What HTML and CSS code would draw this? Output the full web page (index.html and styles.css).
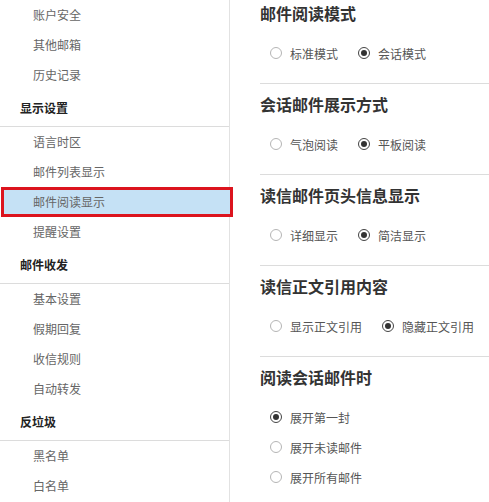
FILE: index.html
```html
<!DOCTYPE html>
<html lang="zh-CN">
<head>
  <meta charset="UTF-8" />
  <meta name="viewport" content="width=device-width, initial-scale=1.0" />
  <title>邮件阅读显示</title>
  <link rel="stylesheet" href="styles.css">
</head>
<body>

  <div class="page">
    <aside class="sidebar">
      <a class="item" href="#">账户安全</a>
      <a class="item" href="#">其他邮箱</a>
      <a class="item" href="#">历史记录</a>
      <div class="group">显示设置</div>
      <a class="item" href="#">语言时区</a>
      <a class="item" href="#">邮件列表显示</a>
      <a class="item active" href="#">邮件阅读显示</a>
      <a class="item" href="#">提醒设置</a>
      <div class="group">邮件收发</div>
      <a class="item" href="#">基本设置</a>
      <a class="item" href="#">假期回复</a>
      <a class="item" href="#">收信规则</a>
      <a class="item" href="#">自动转发</a>
      <div class="group">反垃圾</div>
      <a class="item" href="#">黑名单</a>
      <a class="item" href="#">白名单</a>
    </aside>

    <main class="content">
      <section class="setting">
        <h2>邮件阅读模式</h2>
        <div class="options">
          <label class="radio"><input type="radio" name="mode"><span class="dot"></span>标准模式</label>
          <label class="radio"><input type="radio" name="mode" checked><span class="dot"></span>会话模式</label>
        </div>
      </section>

      <section class="setting">
        <h2>会话邮件展示方式</h2>
        <div class="options">
          <label class="radio"><input type="radio" name="show"><span class="dot"></span>气泡阅读</label>
          <label class="radio"><input type="radio" name="show" checked><span class="dot"></span>平板阅读</label>
        </div>
      </section>

      <section class="setting">
        <h2>读信邮件页头信息显示</h2>
        <div class="options">
          <label class="radio"><input type="radio" name="head"><span class="dot"></span>详细显示</label>
          <label class="radio"><input type="radio" name="head" checked><span class="dot"></span>简洁显示</label>
        </div>
      </section>

      <section class="setting">
        <h2>读信正文引用内容</h2>
        <div class="options">
          <label class="radio"><input type="radio" name="quote"><span class="dot"></span>显示正文引用</label>
          <label class="radio"><input type="radio" name="quote" checked><span class="dot"></span>隐藏正文引用</label>
        </div>
      </section>

      <section class="setting last">
        <h2>阅读会话邮件时</h2>
        <div class="options column">
          <label class="radio"><input type="radio" name="open" checked><span class="dot"></span>展开第一封</label>
          <label class="radio"><input type="radio" name="open"><span class="dot"></span>展开未读邮件</label>
          <label class="radio"><input type="radio" name="open"><span class="dot"></span>展开所有邮件</label>
        </div>
      </section>
    </main>
  </div>

</body>
</html>
```

FILE: styles.css
```css
body {
  margin: 0;
  background: #fff;
  font-family: "Noto Sans CJK SC", "Noto Sans", sans-serif;
  font-size: 12px;
  color: #555;
  overflow: hidden;
}
.page {
  display: flex;
  height: 502px;
}
.sidebar {
  width: 229px;
  flex: none;
  border-right: 1px solid #e2e2e2;
  display: flex;
  flex-direction: column;
}
.item {
  display: block;
  height: 30px;
  line-height: 30px;
  padding-left: 33px;
  color: #666;
  text-decoration: none;
}
.item.active {
  box-sizing: border-box;
  margin: 0 -4px 0 1px;
  padding-left: 29px;
  line-height: 24px;
  background: #c5e1f5;
  border: 3px solid #dc141e;
  position: relative;
  z-index: 1;
}
.group {
  height: 36px;
  line-height: 36px;
  padding-left: 20px;
  font-weight: bold;
  color: #222;
  border-bottom: 1px solid #dcdcdc;
}
.content {
  flex: 1;
  padding-left: 30px;
}
.setting {
  padding: 7px 0 15px;
  border-bottom: 1px solid #dcdcdc;
}
.setting:first-child {
  padding-top: 0;
}
.setting.last {
  border-bottom: none;
}
h2 {
  margin: 0 0 12px;
  height: 26px;
  line-height: 26px;
  font-size: 16px;
  font-weight: bold;
  color: #333;
}
.options {
  display: flex;
  gap: 20px;
  padding-left: 10px;
}
.options.column {
  flex-direction: column;
  gap: 0;
}
.radio {
  display: flex;
  align-items: center;
  height: 30px;
  color: #555;
  cursor: pointer;
}
.radio input {
  display: none;
}
.dot {
  width: 10px;
  height: 10px;
  border: 1px solid #b5b5b5;
  border-radius: 50%;
  margin-right: 8px;
  position: relative;
}
.radio input:checked + .dot {
  border-color: #444;
}
.radio input:checked + .dot::after {
  content: "";
  position: absolute;
  left: 2px;
  top: 2px;
  width: 6px;
  height: 6px;
  border-radius: 50%;
  background: #333;
}
```
